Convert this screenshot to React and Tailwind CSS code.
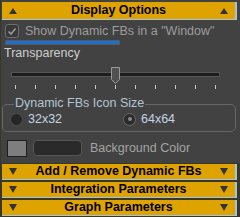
import React from "react";

const Up = () => (
  <svg width="8" height="6" viewBox="0 0 8 6"><polygon points="4,0 8,6 0,6" fill="#333333" /></svg>
);
const Down = () => (
  <svg width="8" height="7" viewBox="0 0 8 7"><polygon points="0,0 8,0 4,7" fill="#333333" /></svg>
);

function Bar({ title }) {
  return (
    <div className="ml-[2px] w-[235px] h-[16px] bg-[#dfa300] border-b border-r-2 border-[#a3c3e3] flex items-center justify-between px-[7px] box-border">
      <Down />
      <span className="text-[12.5px] font-bold text-black leading-[15px]">{title}</span>
      <Down />
    </div>
  );
}

function Radio({ checked }) {
  return (
    <div className={`w-[13px] h-[13px] rounded-full flex items-center justify-center border ${checked ? "border-[#6a6a6a] bg-[#2c2c2c]" : "border-[#4e4e4e] bg-[#262626]"}`}>
      {checked && <div className="w-[4px] h-[4px] rounded-full bg-[#8a8a8a]" />}
    </div>
  );
}

export default function App() {
  const ticks = [0, 1, 2, 3, 4, 5, 6, 7, 8, 9, 10];
  return (
    <div className="w-[240px] h-[217px] bg-[#37372b] flex flex-col overflow-hidden font-['Liberation_Sans',sans-serif] text-[12.5px]">
      <div className="ml-[1px] bg-[#424242] pt-[2px] pb-[5px] flex flex-col">
        <div className="ml-[1px] w-[235px] h-[18px] bg-[#dfa300] border-b border-r-2 border-[#a3c3e3] flex items-center justify-between px-[7px] box-border">
          <Up />
          <span className="text-[12.5px] font-bold text-black leading-[15px]">Display Options</span>
          <Up />
        </div>
        <div className="mt-[4px] h-[14px] flex items-center pl-[4px] gap-[6px]">
          <div className="w-[14px] h-[14px] rounded-[3px] border border-[#6e6e6e] bg-[#383838] flex items-center justify-center">
            <svg width="10" height="9" viewBox="0 0 10 9"><polyline points="1.5,4.5 4,7 8.5,1.5" fill="none" stroke="#9a9a9a" strokeWidth="1.6" /></svg>
          </div>
          <span className="text-[#9c9c9c] leading-[14px]">Show Dynamic FBs in a "Window"</span>
        </div>
        <div className="mt-[2px] ml-[4px] w-[115px] h-[5px] bg-[#202020] border border-[#5a5a5a] rounded-[1px] flex">
          <div className="flex-1 bg-[#1a6fcf]" />
        </div>
        <div className="mt-[1px] pl-[3px] h-[14px] leading-[14px] text-[#cfcfcf]">Transparency</div>
        <div className="mt-[7px] relative h-[22px]">
          <div className="absolute left-[10px] top-[5px] w-[209px] h-[5px] bg-[#1c1c1c] border border-[#555555]" />
          <svg className="absolute left-[110px] top-0" width="9" height="17" viewBox="0 0 9 17">
            <polygon points="0.5,0.5 8.5,0.5 8.5,12.5 4.5,16.5 0.5,12.5" fill="#515151" stroke="#9a9a9a" strokeWidth="1" />
          </svg>
          <div className="absolute left-[14px] top-[18px] w-[201px] h-[4px] flex justify-between">
            {ticks.map((t) => (
              <div key={t} className="w-[1px] h-[4px] bg-[#c8c8c8]" />
            ))}
          </div>
        </div>
        <div className="mt-[15px] ml-[1px] w-[234px] h-[28px] border border-[#666666] rounded-[5px] relative flex items-center pl-[7px]">
          <span className="absolute -top-[8px] left-[11px] leading-[13px] px-[1px] bg-[#424242] text-[#b4c4d4]">Dynamic FBs Icon Size</span>
          <div className="flex items-center gap-[5px] w-[113px] pt-[2px]">
            <Radio />
            <span className="text-[#c4d4e4]">32x32</span>
          </div>
          <div className="flex items-center gap-[5px] pt-[2px]">
            <Radio checked />
            <span className="text-[#c4d4e4]">64x64</span>
          </div>
        </div>
        <div className="mt-[7px] flex items-center pl-[6px]">
          <div className="w-[20px] h-[17px] bg-[#7e7e7e] border border-[#1e1e1e]" />
          <div className="ml-[6px] w-[49px] h-[16px] rounded-[4px] bg-[#2a2a2a] border border-[#555555]" />
          <span className="ml-[8px] text-[#a4a4a4]">Background Color</span>
        </div>
      </div>
      <div className="mt-[1px] flex flex-col gap-[2px]">
        <Bar title="Add / Remove Dynamic FBs" />
        <Bar title="Integration Parameters" />
        <Bar title="Graph Parameters" />
      </div>
    </div>
  );
}
